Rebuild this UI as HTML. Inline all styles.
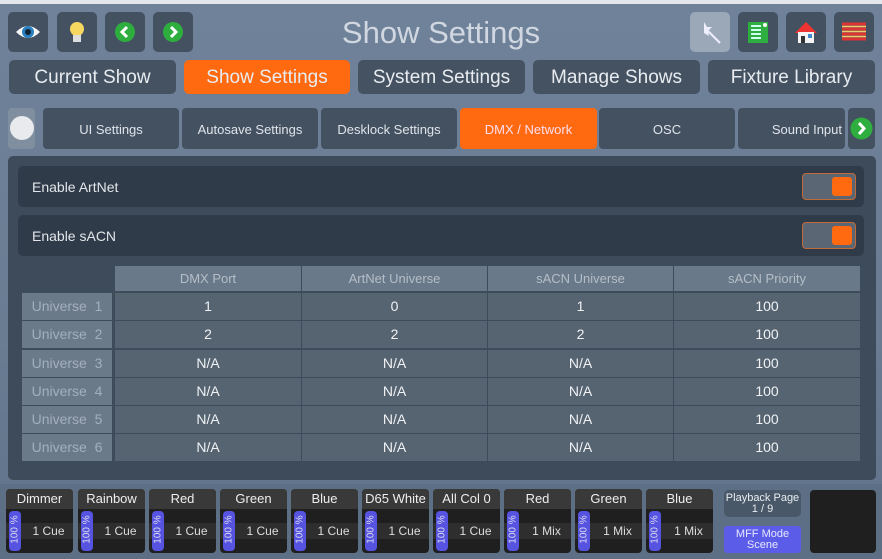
<!DOCTYPE html>
<html><head><meta charset="utf-8"><style>
*{box-sizing:border-box;margin:0;padding:0}
body{width:882px;height:559px;overflow:hidden;background:linear-gradient(#6f829a,#6a7c92 60%,#60728a);font-family:"Liberation Sans",sans-serif;position:relative}
.a{position:absolute}
.ib{position:absolute;top:12px;width:40px;height:40px;border-radius:5px;background:#435161}
.tab{position:absolute;top:60px;height:34px;border-radius:5px;background:#445262;color:#e8ecf0;font-size:19px;text-align:center;line-height:36px}
.st{position:absolute;top:108px;height:41px;border-radius:4px;background:#445161;color:#dfe4ea;font-size:13px;text-align:center;line-height:43px}
.row{position:absolute;left:18px;width:846px;height:41px;background:#2f3b48;border-radius:5px;color:#e2e6ea;font-size:14px;line-height:42px;padding-left:14px}
.tg{position:absolute;right:8px;top:7px;width:54px;height:27px;border:1px solid #c06a3a;border-radius:4px;background:#5a6674}
.tg i{position:absolute;right:3px;top:3px;width:20px;height:19px;background:#ff6a10;border-radius:3px}
.h{position:absolute;top:266px;height:25px;background:#6a7989;color:#b4bec8;font-size:13px;text-align:center;line-height:25px}
.c{position:absolute;height:27px;background:#566472;color:#f0f2f4;font-size:14px;text-align:center;line-height:27px}
.l{position:absolute;left:22px;width:90px;height:27px;background:#6b7a89;color:#a3afbb;font-size:14px;text-align:center;line-height:27px}
.f{position:absolute;top:489px;width:67px;height:64px;border-radius:4px;background:#1f1f1f;overflow:hidden}
.f b{display:block;height:20px;background:#393939;color:#eee;font-weight:normal;font-size:13px;text-align:center;line-height:20px}
.f s{position:absolute;left:0;right:0;top:34px;height:16px;background:#2e2e2e;text-decoration:none}
.f u{position:absolute;left:3px;top:22px;width:12px;height:40px;background:#5653e0;border-radius:4px}
.f u em{position:absolute;left:-14px;top:13px;width:40px;transform:rotate(-90deg);font-style:normal;color:#dde;font-size:10px;text-align:center}
.f span{position:absolute;left:20px;right:2px;top:34px;color:#ddd;font-size:12px;text-align:center;line-height:16px}
</style></head><body>
<div class="a" style="left:0;top:0;width:882px;height:4px;background:#e4e8ec"></div>
<div class="ib" style="left:8px"><svg width="40" height="40"><path d="M8 20Q20 8 32 20Q20 32 8 20Z" fill="#f4f6f8"/><circle cx="20" cy="20" r="6" fill="#2a7fc0"/><circle cx="20" cy="20" r="3" fill="#123"/></svg></div>
<div class="ib" style="left:57px"><svg width="40" height="40"><circle cx="20" cy="17" r="7" fill="#f6d860"/><rect x="16" y="23" width="8" height="7" fill="#ddd"/></svg></div>
<div class="ib" style="left:105px"><svg width="40" height="40"><circle cx="20" cy="20" r="10" fill="#2eae3e"/><path d="M22 15l-5 5 5 5" stroke="#fff" stroke-width="3" fill="none"/></svg></div>
<div class="ib" style="left:153px"><svg width="40" height="40"><circle cx="20" cy="20" r="10" fill="#2eae3e"/><path d="M18 15l5 5-5 5" stroke="#fff" stroke-width="3" fill="none"/></svg></div>
<div class="a" style="left:0;width:882px;top:15px;text-align:center;color:#d0d7e0;font-size:31px;font-weight:300">Show Settings</div>
<div class="ib" style="left:690px;background:#9aa8b8"><svg width="40" height="40"><path d="M14 10l3 5 5 0-4 4 1 5-5-3" fill="#eef"/><path d="M18 19l12 12" stroke="#eef" stroke-width="2"/></svg></div>
<div class="ib" style="left:738px"><svg width="40" height="40"><rect x="10" y="10" width="20" height="21" fill="#2eae3e"/><path d="M13 14h10M13 18h10M13 22h10M13 26h10" stroke="#cfe" stroke-width="2"/><circle cx="27" cy="13" r="2" fill="#fff"/></svg></div>
<div class="ib" style="left:786px"><svg width="40" height="40"><path d="M9 21L20 10 31 21" fill="#e33"/><rect x="12" y="20" width="16" height="11" fill="#f4f4f4"/><rect x="15" y="24" width="4" height="7" fill="#333"/><rect x="22" y="22" width="4" height="4" fill="#48c"/></svg></div>
<div class="ib" style="left:834px"><svg width="40" height="40"><path d="M8 12h24M8 17h24M8 22h24M8 27h24" stroke="#d33" stroke-width="3"/><path d="M8 14.5h24M8 19.5h24M8 24.5h24" stroke="#e8d070" stroke-width="1.5"/></svg></div>

<div class="tab" style="left:9px;width:167px">Current Show</div>
<div class="tab" style="left:184px;width:166px;background:#ff6a10">Show Settings</div>
<div class="tab" style="left:358px;width:167px">System Settings</div>
<div class="tab" style="left:533px;width:167px">Manage Shows</div>
<div class="tab" style="left:708px;width:167px">Fixture Library</div>

<div class="a" style="left:8px;top:108px;width:27px;height:41px;border-radius:4px;background:#7f8fa0"><div class="a" style="left:2px;top:8px;width:24px;height:24px;border-radius:50%;background:#e8eaee"></div></div>
<div class="st" style="left:43px;width:136px">UI Settings</div>
<div class="st" style="left:182px;width:136px">Autosave Settings</div>
<div class="st" style="left:321px;width:136px">Desklock Settings</div>
<div class="st" style="left:460px;width:137px;background:#ff6a10;color:#fde">DMX / Network</div>
<div class="st" style="left:599px;width:136px">OSC</div>
<div class="st" style="left:738px;width:107px;text-align:right;padding-right:3px">Sound Input</div>
<div class="st" style="left:848px;width:27px"><svg class="a" style="left:1px;top:8px" width="25" height="25"><circle cx="12.5" cy="12.5" r="11" fill="#2eae3e"/><path d="M10 7l5 5.5-5 5.5" stroke="#fff" stroke-width="3" fill="none"/></svg></div>

<div class="a" style="left:8px;top:156px;width:868px;height:324px;background:#3e4b5a;border-radius:5px"></div>
<div class="row" style="top:166px">Enable ArtNet<div class="tg"><i></i></div></div>
<div class="row" style="top:215px">Enable sACN<div class="tg"><i></i></div></div>

<div class="h" style="left:115px;width:186px">DMX Port</div>
<div class="h" style="left:302px;width:185px">ArtNet Universe</div>
<div class="h" style="left:488px;width:185px">sACN Universe</div>
<div class="h" style="left:674px;width:186px">sACN Priority</div>

<div class="l" style="top:293px">Universe &nbsp;1</div>
<div class="c" style="top:293px;left:115px;width:186px">1</div><div class="c" style="top:293px;left:302px;width:185px">0</div><div class="c" style="top:293px;left:488px;width:185px">1</div><div class="c" style="top:293px;left:674px;width:186px">100</div>
<div class="l" style="top:321px">Universe &nbsp;2</div>
<div class="c" style="top:321px;left:115px;width:186px">2</div><div class="c" style="top:321px;left:302px;width:185px">2</div><div class="c" style="top:321px;left:488px;width:185px">2</div><div class="c" style="top:321px;left:674px;width:186px">100</div>
<div class="l" style="top:350px">Universe &nbsp;3</div>
<div class="c" style="top:350px;left:115px;width:186px">N/A</div><div class="c" style="top:350px;left:302px;width:185px">N/A</div><div class="c" style="top:350px;left:488px;width:185px">N/A</div><div class="c" style="top:350px;left:674px;width:186px">100</div>
<div class="l" style="top:378px">Universe &nbsp;4</div>
<div class="c" style="top:378px;left:115px;width:186px">N/A</div><div class="c" style="top:378px;left:302px;width:185px">N/A</div><div class="c" style="top:378px;left:488px;width:185px">N/A</div><div class="c" style="top:378px;left:674px;width:186px">100</div>
<div class="l" style="top:406px">Universe &nbsp;5</div>
<div class="c" style="top:406px;left:115px;width:186px">N/A</div><div class="c" style="top:406px;left:302px;width:185px">N/A</div><div class="c" style="top:406px;left:488px;width:185px">N/A</div><div class="c" style="top:406px;left:674px;width:186px">100</div>
<div class="l" style="top:434px">Universe &nbsp;6</div>
<div class="c" style="top:434px;left:115px;width:186px">N/A</div><div class="c" style="top:434px;left:302px;width:185px">N/A</div><div class="c" style="top:434px;left:488px;width:185px">N/A</div><div class="c" style="top:434px;left:674px;width:186px">100</div>

<div class="a" style="left:0;top:484px;width:882px;height:75px;background:#5d6f84"></div>
<div class="f" style="left:6px"><b>Dimmer</b><s></s><u><em>100 %</em></u><span>1 Cue</span></div>
<div class="f" style="left:78px"><b>Rainbow</b><s></s><u><em>100 %</em></u><span>1 Cue</span></div>
<div class="f" style="left:149px"><b>Red</b><s></s><u><em>100 %</em></u><span>1 Cue</span></div>
<div class="f" style="left:220px"><b>Green</b><s></s><u><em>100 %</em></u><span>1 Cue</span></div>
<div class="f" style="left:291px"><b>Blue</b><s></s><u><em>100 %</em></u><span>1 Cue</span></div>
<div class="f" style="left:362px"><b>D65 White</b><s></s><u><em>100 %</em></u><span>1 Cue</span></div>
<div class="f" style="left:433px"><b>All Col 0</b><s></s><u><em>100 %</em></u><span>1 Cue</span></div>
<div class="f" style="left:504px"><b>Red</b><s></s><u><em>100 %</em></u><span>1 Mix</span></div>
<div class="f" style="left:575px"><b>Green</b><s></s><u><em>100 %</em></u><span>1 Mix</span></div>
<div class="f" style="left:646px"><b>Blue</b><s></s><u><em>100 %</em></u><span>1 Mix</span></div>
<div class="a" style="left:724px;top:490px;width:77px;height:27px;border-radius:5px;background:#485868;color:#e8ecf0;font-size:11px;text-align:center;line-height:11px;padding-top:3px">Playback Page<br>1 / 9</div>
<div class="a" style="left:724px;top:526px;width:77px;height:27px;border-radius:3px;background:#5b5de8;color:#e8e8ff;font-size:11px;text-align:center;line-height:11px;padding-top:3px">MFF Mode<br>Scene</div>
<div class="a" style="left:810px;top:490px;width:66px;height:63px;border-radius:4px;background:#1f1f1f"></div>
</body></html>
